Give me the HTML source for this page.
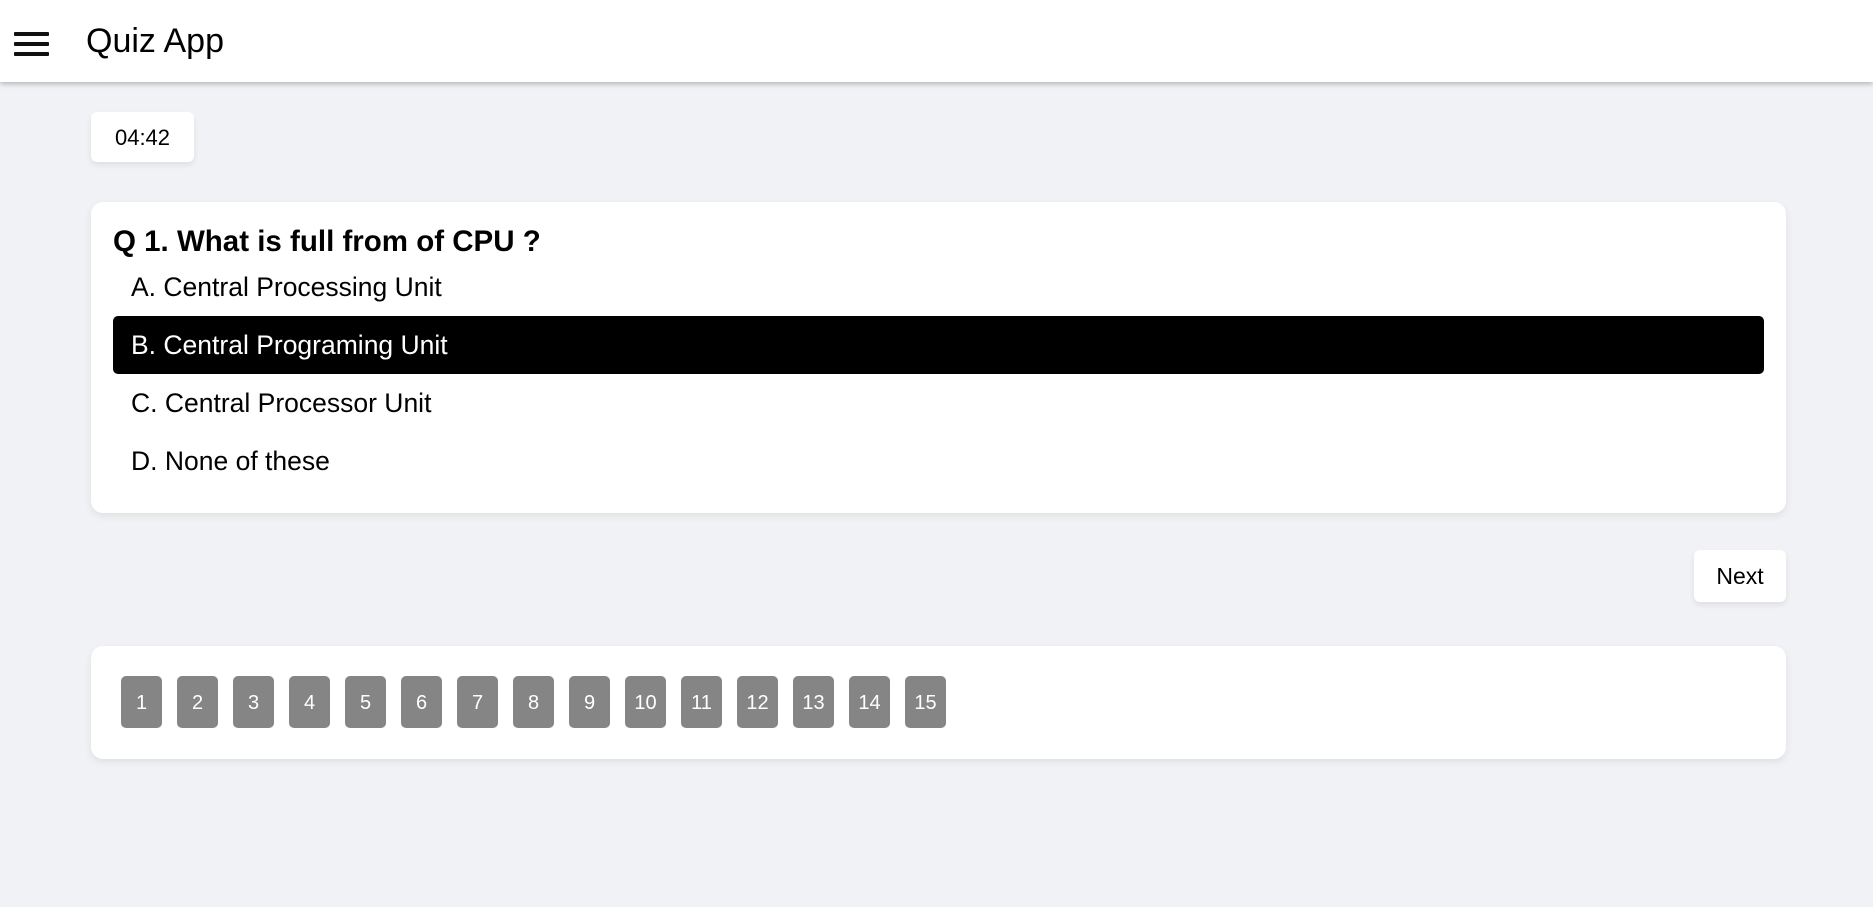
<!DOCTYPE html>
<html><head><meta charset="utf-8"><style>
*{box-sizing:border-box;margin:0;padding:0}
body{width:1873px;height:907px;background:#f1f2f5;font-family:"Liberation Sans",Arial,sans-serif;color:#000;position:relative;overflow:hidden}
.hdr{position:absolute;left:0;top:0;width:1873px;height:82px;background:#fff;box-shadow:0 2px 5px rgba(0,0,0,.25)}
.ham{position:absolute;left:14px;top:32px;width:35px}
.ham div{height:4px;background:#111;margin-bottom:6px;border-radius:1px}
.title{position:absolute;left:86px;top:22px;font-size:34px}
.timer{position:absolute;left:91px;top:112px;width:103px;height:50px;background:#fff;border-radius:6px;box-shadow:0 3px 6px rgba(0,0,0,.08);font-size:22px;line-height:52px;text-align:center}
.card{position:absolute;left:91px;width:1695px;background:#fff;border-radius:12px;box-shadow:0 3px 8px rgba(0,0,0,.08)}
.q{position:absolute;left:22px;top:23px;font-size:29.5px;font-weight:bold}
.opt{position:absolute;left:22px;width:1651px;height:58px;line-height:58px;padding-left:18px;font-size:26.5px;border-radius:5px}
.sel{background:#000;color:#fff}
.next{position:absolute;left:1694px;top:550px;width:92px;height:52px;background:#fff;border-radius:6px;box-shadow:0 3px 6px rgba(0,0,0,.08);font-size:23px;line-height:52px;text-align:center}
.nb{position:absolute;top:30px;width:41px;height:52px;background:#858585;color:#fff;border-radius:5px;font-size:20px;line-height:54px;text-align:center}
</style></head><body>
<div class="hdr"><div class="ham"><div></div><div></div><div></div></div><div class="title">Quiz App</div></div>
<div class="timer">04:42</div>
<div class="card" style="top:202px;height:311px">
<div class="q">Q 1. What is full from of CPU ?</div>
<div class="opt" style="top:56px">A. Central Processing Unit</div>
<div class="opt sel" style="top:114px">B. Central Programing Unit</div>
<div class="opt" style="top:172px">C. Central Processor Unit</div>
<div class="opt" style="top:230px">D. None of these</div>
</div>
<div class="next">Next</div>
<div class="card" style="top:646px;height:113px">
<div class="nb" style="left:30px">1</div><div class="nb" style="left:86px">2</div><div class="nb" style="left:142px">3</div><div class="nb" style="left:198px">4</div><div class="nb" style="left:254px">5</div><div class="nb" style="left:310px">6</div><div class="nb" style="left:366px">7</div><div class="nb" style="left:422px">8</div><div class="nb" style="left:478px">9</div><div class="nb" style="left:534px">10</div><div class="nb" style="left:590px">11</div><div class="nb" style="left:646px">12</div><div class="nb" style="left:702px">13</div><div class="nb" style="left:758px">14</div><div class="nb" style="left:814px">15</div>
</div>
</body></html>
